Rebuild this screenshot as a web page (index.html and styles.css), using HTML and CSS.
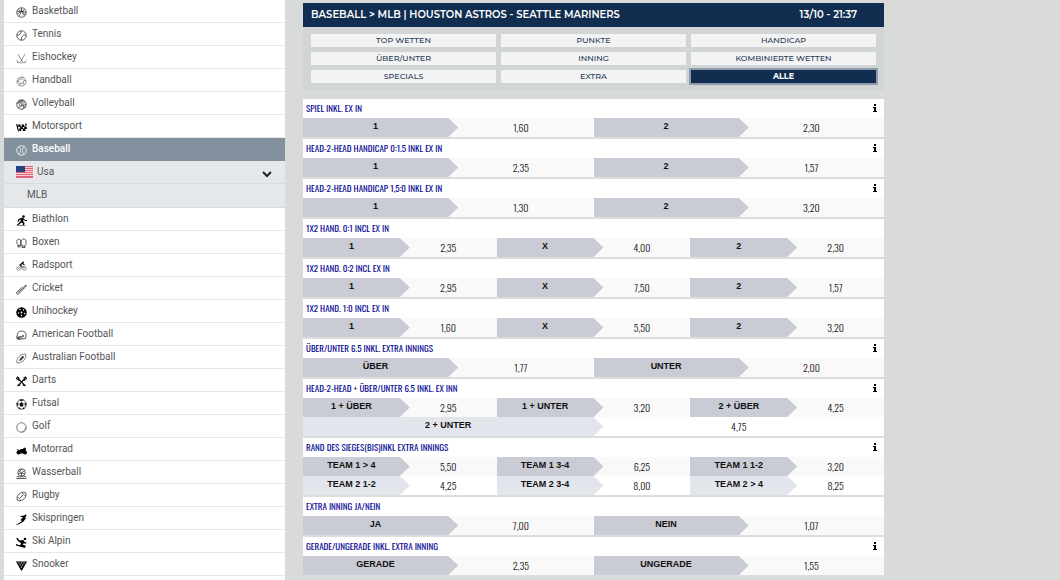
FILE: index.html
```html
<!DOCTYPE html>
<html lang="de">
<head>
<meta charset="utf-8">
<meta name="viewport" content="width=device-width, initial-scale=1">
<title>Houston Astros - Seattle Mariners</title>
<link rel="stylesheet" href="styles.css">
</head>
<body>
<div class="page">
  <nav class="sports" aria-label="Sportarten">
    <a class="sport" href="#"><svg class="icon" viewBox="0 0 22 22"><circle cx="11" cy="11" r="9.5"/><path d="M11 2v9M2 9c6-1 12-1 18 2M5 4c5 4 5 10 1 15M17 4c-5 4-5 10 0 14M3 14l8-6 8 8"/></svg>Basketball</a>
    <a class="sport" href="#"><svg class="icon" viewBox="0 0 22 22"><circle cx="11" cy="11" r="9.5"/><path d="M2 10c6 1 8-3 8-8M11 20c-1-7 3-11 9-10"/></svg>Tennis</a>
    <a class="sport" href="#"><svg class="icon icon-light" viewBox="0 0 22 22"><path d="M4 2l8 14c1 3 3 4 8 3M18 2l-8 14c-1 3-3 4-8 3M1 15l4 3M21 15l-4 3M9 20h4"/></svg>Eishockey</a>
    <a class="sport" href="#"><svg class="icon icon-light" viewBox="0 0 22 22"><circle cx="11" cy="11" r="9"/><path d="M7 7l5-2 4 4-2 5-6 1-3-4zM7 7L5 4M12 5l2-3M16 9l4 0M14 14l3 4M8 15l-1 4M5 11H2"/></svg>Handball</a>
    <a class="sport" href="#"><svg class="icon" viewBox="0 0 22 22"><circle cx="11" cy="11" r="9.5"/><path d="M11 11C9 7 9 4 12 2M11 11c4-2 7-1 9 1M11 11c-1 4-4 6-7 6M7 3c-2 4-1 8 1 11M15 3c-5 0-9 3-13 7M18 6c-4-1-6 0-8 2M19 16c-3-3-6-3-9-2M13 20c3-2 3-5 2-8"/></svg>Volleyball</a>
    <a class="sport" href="#"><svg class="icon icon-solid" viewBox="0 0 22 22"><path d="M0 4l3 1 3 14-2 0zM4 5h5v5H5zM11 5h5l1 5h-5zM18 3h3v5h-2zM8 9h5l1 5H9zM16 9h5l1 5h-5zM6 13h4l1 5H7zM13 13h5l1 5h-5z"/></svg>Motorsport</a>
    <a class="sport sport-active" href="#" aria-current="page"><svg class="icon" viewBox="0 0 22 22"><circle cx="11" cy="11" r="9.5"/><path d="M6 3c4 5 4 11 0 16M16 3c-4 5-4 11 0 16"/></svg>Baseball</a>
    <button class="country" type="button" aria-expanded="true">
      <svg class="flag" viewBox="0 0 17 12"><path fill="#f4ccd4" d="M0 0h17v12H0z"/><path stroke="#e0607a" stroke-width="1" d="M0 .5h17M0 2.5h17M0 4.5h17M0 6.5h17M0 8.500h17M0 10.500h17M0 11.500h17"/><path fill="#26417f" d="M0 0h9v6H0z"/></svg>
      <span>Usa</span>
      <svg class="chevron" viewBox="0 0 10 7"><path d="M1 1l4 4 4-4"/></svg>
    </button>
    <a class="league" href="#">MLB</a>
    <a class="sport" href="#"><svg class="icon icon-solid" viewBox="0 0 22 22"><circle cx="15" cy="3" r="2.500"/><path d="M13 5l-8 3-2 5 2 1 2-4 3-1-2 5-6 5 2 2 7-6 3 2-1 5h3l1-6-3-4 2-3 2 3 4 0v-2l-3 0zM1 20h18v1H1z"/></svg>Biathlon</a>
    <a class="sport" href="#"><svg class="icon" viewBox="0 0 22 22"><path d="M2 5c1-3 6-3 7-1v10l-1 4H4v-5c-3-2-3-5-2-8zM11 5c1-4 8-4 9 0v8l-2 2v4h-6v-5c-2-3-2-6-1-9zM4 15h4M12 16h6"/></svg>Boxen</a>
    <a class="sport" href="#"><svg class="icon icon-light" viewBox="0 0 22 22"><circle cx="5" cy="15" r="3.500"/><circle cx="17" cy="15" r="3.500"/><path class="ink" d="M12 3l-6 5 5 3-1 5 3-6-3-2 3-2 3 3 2-1-3-3z"/><circle class="ink" cx="14" cy="3" r="2"/><path d="M5 15l4-4 3 4 3-5 2 5"/></svg>Radsport</a>
    <a class="sport" href="#"><svg class="icon" viewBox="0 0 22 22"><path d="M2 20l-1-3L12 7l3 3L5 20zM13 8l7-6 1 1-6 7M4 17l8-7"/></svg>Cricket</a>
    <a class="sport" href="#"><svg class="icon icon-solid" viewBox="0 0 22 22"><circle cx="11" cy="11" r="10.500"/><g fill="#fff"><circle cx="8" cy="5" r="1.500"/><circle cx="15" cy="6" r="1.500"/><circle cx="11" cy="11" r="1.800"/><circle cx="5" cy="12" r="1.500"/><circle cx="17" cy="13" r="1.500"/><circle cx="11" cy="17" r="1.500"/></g></svg>Unihockey</a>
    <a class="sport" href="#"><svg class="icon" viewBox="0 0 22 22"><path d="M3 13C1 6 6 2 12 2c6 0 9 5 8 10l-1 5-6 1-2-5-4 0-1 4zM1 13l1 5 7 1 3-2M2 16h8M6 13v6"/><circle cx="14" cy="12" r="1.500"/></svg>American Football</a>
    <a class="sport" href="#"><svg class="icon" viewBox="0 0 22 22"><path d="M2 20C0 11 7 2 19 2c3 9-5 18-17 18z" stroke-width="1.200"/><path d="M7 15l8-8M8 11l3 3M10 9l3 3M12 7l3 3" stroke-width="2.200"/></svg>Australian Football</a>
    <a class="sport" href="#"><svg class="icon icon-bold" viewBox="0 0 22 22"><path d="M3 20L18 5M19 20L4 5M1 5l4 3 1-4-3-2zM21 5l-4 3-1-4 3-2zM9 14l-3 6M13 14l3 6"/></svg>Darts</a>
    <a class="sport" href="#"><svg class="icon" viewBox="0 0 22 22"><circle cx="11" cy="11" r="9.500"/><path class="ink" d="M7 9l4-3 4 3-1 6H8zM6 1h10l-5 4zM1 8l4 0-1 8zM21 8l-4 0 1 8zM5 20l1-4 4 4zM17 20l-1-4-4 4z"/></svg>Futsal</a>
    <a class="sport" href="#"><svg class="icon icon-thin" viewBox="0 0 22 22"><circle cx="11" cy="11" r="9.500"/><path d="M12 19c4-1 7-4 7-8" stroke-dasharray="2 1"/></svg>Golf</a>
    <a class="sport" href="#"><svg class="icon icon-solid" viewBox="0 0 22 22"><circle cx="5" cy="15" r="4"/><circle cx="18" cy="15" r="4"/><path d="M1 8l6 2 3-2h4l2-3 3 1 1 3-2 8H7l-3-6z"/></svg>Motorrad</a>
    <a class="sport" href="#"><svg class="icon" viewBox="0 0 22 22"><circle cx="11" cy="9" r="7.500"/><path d="M5 5l6 5 6-5M11 10v6M4 11l7-1 7 2M11 2l-3 5M1 18l3-1 3 1 4-1 4 1 3-1 3 1M1 21h20"/></svg>Wasserball</a>
    <a class="sport" href="#"><svg class="icon" viewBox="0 0 22 22"><path d="M3 19C-1 11 8 0 19 3c4 8-5 19-16 16zM8 14l6-6M3 13c3 0 5 3 6 6M13 3c0 3 3 5 6 6M9 12l1 1M12 9l1 1"/></svg>Rugby</a>
    <a class="sport" href="#"><svg class="icon icon-solid" viewBox="0 0 22 22"><circle cx="19" cy="3" r="2"/><path d="M17 3l-8 1 0 2 5 0-5 6 3 2-9 6-3 0 0 1 5 0 10-6 6-8-4 2 3-4z"/></svg>Skispringen</a>
    <a class="sport" href="#"><svg class="icon icon-solid" viewBox="0 0 22 22"><circle cx="18" cy="4" r="2.500"/><path d="M0 3l3-1 4 5 8-1 2 4 4 1v2l-6 0-2 2 6 2v4h-4l0-2-7-2 2-5-5-3zM0 14l18 6v2L0 17z"/></svg>Ski Alpin</a>
    <a class="sport" href="#"><svg class="icon icon-solid" viewBox="0 0 22 22"><path d="M0 3h22L12 21h-2z"/><g fill="#ddd"><circle cx="6" cy="6" r="1.400"/><circle cx="11" cy="6" r="1.400"/><circle cx="16" cy="6" r="1.400"/><circle cx="8.500" cy="10" r="1.400"/><circle cx="13.500" cy="10" r="1.400"/><circle cx="11" cy="14" r="1.400"/></g></svg>Snooker</a>
  </nav>

  <main class="event">
    <header class="event-head">
      <h1 class="event-title">BASEBALL &gt; MLB | HOUSTON ASTROS - SEATTLE MARINERS</h1>
      <time class="event-time">13/10 - 21:37</time>
    </header>
    <div class="filters">
      <button class="filter" type="button">TOP WETTEN</button>
      <button class="filter" type="button">PUNKTE</button>
      <button class="filter" type="button">HANDICAP</button>
      <button class="filter" type="button">ÜBER/UNTER</button>
      <button class="filter" type="button">INNING</button>
      <button class="filter" type="button">KOMBINIERTE WETTEN</button>
      <button class="filter" type="button">SPECIALS</button>
      <button class="filter" type="button">EXTRA</button>
      <button class="filter filter-active" type="button" aria-pressed="true">ALLE</button>
    </div>

    <div class="markets">
      <section class="market">
        <div class="market-head"><h2 class="market-title">SPIEL INKL. EX IN</h2><button class="info" type="button" aria-label="Info"><svg class="info-icon" viewBox="0 0 4 8"><path d="M1 0h2v2H1zM0 3h3v4h1v1H0V7h1V4H0z"/></svg></button></div>
        <div class="odds-row"><button class="bet" type="button"><span class="pick">1</span><span class="odd">1,60</span></button><button class="bet" type="button"><span class="pick">2</span><span class="odd">2,30</span></button></div>
      </section>
      <section class="market">
        <div class="market-head"><h2 class="market-title">HEAD-2-HEAD HANDICAP 0:1.5 INKL EX IN</h2><button class="info" type="button" aria-label="Info"><svg class="info-icon" viewBox="0 0 4 8"><path d="M1 0h2v2H1zM0 3h3v4h1v1H0V7h1V4H0z"/></svg></button></div>
        <div class="odds-row"><button class="bet" type="button"><span class="pick">1</span><span class="odd">2,35</span></button><button class="bet" type="button"><span class="pick">2</span><span class="odd">1,57</span></button></div>
      </section>
      <section class="market">
        <div class="market-head"><h2 class="market-title">HEAD-2-HEAD HANDICAP 1,5:0 INKL EX IN</h2><button class="info" type="button" aria-label="Info"><svg class="info-icon" viewBox="0 0 4 8"><path d="M1 0h2v2H1zM0 3h3v4h1v1H0V7h1V4H0z"/></svg></button></div>
        <div class="odds-row"><button class="bet" type="button"><span class="pick">1</span><span class="odd">1,30</span></button><button class="bet" type="button"><span class="pick">2</span><span class="odd">3,20</span></button></div>
      </section>
      <section class="market">
        <div class="market-head"><h2 class="market-title">1X2 HAND. 0:1 INCL EX IN</h2></div>
        <div class="odds-row"><button class="bet" type="button"><span class="pick">1</span><span class="odd">2,35</span></button><button class="bet" type="button"><span class="pick">X</span><span class="odd">4,00</span></button><button class="bet" type="button"><span class="pick">2</span><span class="odd">2,30</span></button></div>
      </section>
      <section class="market">
        <div class="market-head"><h2 class="market-title">1X2 HAND. 0:2 INCL EX IN</h2></div>
        <div class="odds-row"><button class="bet" type="button"><span class="pick">1</span><span class="odd">2,95</span></button><button class="bet" type="button"><span class="pick">X</span><span class="odd">7,50</span></button><button class="bet" type="button"><span class="pick">2</span><span class="odd">1,57</span></button></div>
      </section>
      <section class="market">
        <div class="market-head"><h2 class="market-title">1X2 HAND. 1:0 INCL EX IN</h2></div>
        <div class="odds-row"><button class="bet" type="button"><span class="pick">1</span><span class="odd">1,60</span></button><button class="bet" type="button"><span class="pick">X</span><span class="odd">5,50</span></button><button class="bet" type="button"><span class="pick">2</span><span class="odd">3,20</span></button></div>
      </section>
      <section class="market">
        <div class="market-head"><h2 class="market-title">ÜBER/UNTER 6.5 INKL. EXTRA INNINGS</h2><button class="info" type="button" aria-label="Info"><svg class="info-icon" viewBox="0 0 4 8"><path d="M1 0h2v2H1zM0 3h3v4h1v1H0V7h1V4H0z"/></svg></button></div>
        <div class="odds-row"><button class="bet" type="button"><span class="pick">ÜBER</span><span class="odd">1,77</span></button><button class="bet" type="button"><span class="pick">UNTER</span><span class="odd">2,00</span></button></div>
      </section>
      <section class="market">
        <div class="market-head"><h2 class="market-title">HEAD-2-HEAD + ÜBER/UNTER 6.5 INKL. EX INN</h2><button class="info" type="button" aria-label="Info"><svg class="info-icon" viewBox="0 0 4 8"><path d="M1 0h2v2H1zM0 3h3v4h1v1H0V7h1V4H0z"/></svg></button></div>
        <div class="odds-row"><button class="bet" type="button"><span class="pick">1 + ÜBER</span><span class="odd">2,95</span></button><button class="bet" type="button"><span class="pick">1 + UNTER</span><span class="odd">3,20</span></button><button class="bet" type="button"><span class="pick">2 + ÜBER</span><span class="odd">4,25</span></button></div>
        <div class="odds-row odds-row-alt"><button class="bet" type="button"><span class="pick">2 + UNTER</span><span class="odd">4,75</span></button></div>
      </section>
      <section class="market">
        <div class="market-head"><h2 class="market-title">RAND DES SIEGES(BIS)INKL EXTRA INNINGS</h2><button class="info" type="button" aria-label="Info"><svg class="info-icon" viewBox="0 0 4 8"><path d="M1 0h2v2H1zM0 3h3v4h1v1H0V7h1V4H0z"/></svg></button></div>
        <div class="odds-row"><button class="bet" type="button"><span class="pick">TEAM 1 &gt; 4</span><span class="odd">5,50</span></button><button class="bet" type="button"><span class="pick">TEAM 1 3-4</span><span class="odd">6,25</span></button><button class="bet" type="button"><span class="pick">TEAM 1 1-2</span><span class="odd">3,20</span></button></div>
        <div class="odds-row odds-row-alt"><button class="bet" type="button"><span class="pick">TEAM 2 1-2</span><span class="odd">4,25</span></button><button class="bet" type="button"><span class="pick">TEAM 2 3-4</span><span class="odd">8,00</span></button><button class="bet" type="button"><span class="pick">TEAM 2 &gt; 4</span><span class="odd">8,25</span></button></div>
      </section>
      <section class="market">
        <div class="market-head"><h2 class="market-title">EXTRA INNING JA/NEIN</h2></div>
        <div class="odds-row"><button class="bet" type="button"><span class="pick">JA</span><span class="odd">7,00</span></button><button class="bet" type="button"><span class="pick">NEIN</span><span class="odd">1,07</span></button></div>
      </section>
      <section class="market">
        <div class="market-head"><h2 class="market-title">GERADE/UNGERADE INKL. EXTRA INNING</h2><button class="info" type="button" aria-label="Info"><svg class="info-icon" viewBox="0 0 4 8"><path d="M1 0h2v2H1zM0 3h3v4h1v1H0V7h1V4H0z"/></svg></button></div>
        <div class="odds-row"><button class="bet" type="button"><span class="pick">GERADE</span><span class="odd">2,35</span></button><button class="bet" type="button"><span class="pick">UNGERADE</span><span class="odd">1,55</span></button></div>
      </section>
    </div>
  </main>
</div>
</body>
</html>
```
FILE: styles.css
```css
* {
  box-sizing: border-box;
}

body {
  margin: 0;
  background: #d9dbda;
  font-family: Roboto, "Liberation Sans", sans-serif;
}

button {
  margin: 0;
  padding: 0;
  border: 0;
  background: none;
  font: inherit;
  color: inherit;
  cursor: pointer;
}

.page {
  display: grid;
  grid-template-columns: minmax(200px, 281fr) minmax(400px, 581fr) 158fr;
  column-gap: 18px;
  min-height: 100vh;
  padding-left: 4px;
}

/* Sports list */

.sports {
  display: flex;
  flex-direction: column;
  background: #fff;
}

.sport,
.country,
.league {
  display: flex;
  align-items: center;
  height: 23px;
  padding: 0 12px 1px;
  border-bottom: 1px solid #e6e8e8;
  color: #555;
  font-size: 10px;
  line-height: 14px;
  text-decoration: none;
}

.sport {
  gap: 5px;
}

.sport-active {
  background: #82919d;
  border-color: #82919d;
  color: #fff;
  font-weight: 500;
}

.country,
.league {
  background: #e5e8eb;
  border-color: #d8dcde;
}

.country {
  gap: 4px;
  text-align: left;
}

.league {
  height: 24px;
  padding-left: 23px;
}

.icon {
  width: 11px;
  height: 11px;
  margin-top: 3px;
  fill: none;
  stroke: #333;
  stroke-width: 1.6;
}

.icon-light {
  stroke: #777;
}

.icon-thin {
  stroke-width: 1.3;
}

.icon-bold {
  stroke: #111;
  stroke-width: 2.2;
}

.icon-solid {
  fill: #000;
  stroke: none;
}

.icon .ink {
  fill: #111;
  stroke: none;
}

.sport-active .icon {
  stroke: #fff;
}

.flag {
  width: 17px;
  height: 12px;
}

.chevron {
  width: 10px;
  height: 7px;
  margin: 5px 1px 0 auto;
  fill: none;
  stroke: #222;
  stroke-width: 2;
}

/* Event */

.event {
  padding-top: 3px;
}

.event-head {
  display: flex;
  align-items: center;
  justify-content: space-between;
  height: 24px;
  padding: 0 27px 1px 8px;
  background: #112e51;
  color: #fff;
  font-family: Montserrat, Inter, sans-serif;
  font-size: 10px;
  font-weight: 600;
}

.event-title {
  margin: 0;
  font-size: inherit;
  font-weight: inherit;
}

.filters {
  display: grid;
  grid-template-columns: repeat(3, 1fr);
  gap: 5px;
  padding: 7px 8px;
  background: #d1d5d5;
}

.filter {
  height: 13px;
  background: #f3f3f3;
  color: #263b57;
  font-family: Montserrat, Inter, sans-serif;
  font-size: 8px;
  font-weight: 500;
  line-height: 13px;
}

.filter-active {
  background: #112e51;
  color: #fff;
  font-weight: 700;
  outline: 2px solid #8d9bad;
}

/* Markets */

.markets {
  margin-top: 9px;
}

.market {
  background: #fff;
  border-bottom: 2px solid #dcdedd;
}

.market-head {
  display: flex;
  align-items: center;
  justify-content: space-between;
  height: 19px;
  padding: 0 7px 1px 3px;
}

.market-title {
  margin: 0;
  color: #0c0c96;
  font-family: Oswald, "Roboto Condensed", sans-serif;
  font-size: 9px;
  font-weight: 400;
}

.info {
  display: flex;
}

.info-icon {
  width: 4px;
  height: 8px;
  fill: #000;
}

.odds-row {
  display: flex;
  height: 19px;
  background: #f9f9f9;
}

.bet {
  display: flex;
  flex: 1;
}

.pick,
.odd {
  flex: 1;
  height: 100%;
}

.pick {
  position: relative;
  background: #c9ccd4;
  color: #111;
  font-family: "Liberation Sans", Arial, sans-serif;
  font-size: 9px;
  font-weight: 700;
  line-height: 17px;
}

/* Overlaps the label by 1px so that no seam shows at the arrow's base */
.pick::after {
  content: "";
  position: absolute;
  top: 0;
  left: calc(100% - 1px);
  width: 11px;
  height: 100%;
  background: inherit;
  clip-path: polygon(0 0, 1px 0, 100% 50%, 1px 100%, 0 100%);
}

.odd {
  color: #111;
  font-family: Oswald, "Roboto Condensed", sans-serif;
  font-size: 10px;
  font-weight: 300;
  line-height: 20px;
}

.odds-row-alt {
  background: #fff;
}

.odds-row-alt .pick {
  background: #e2e6ec;
}
```
